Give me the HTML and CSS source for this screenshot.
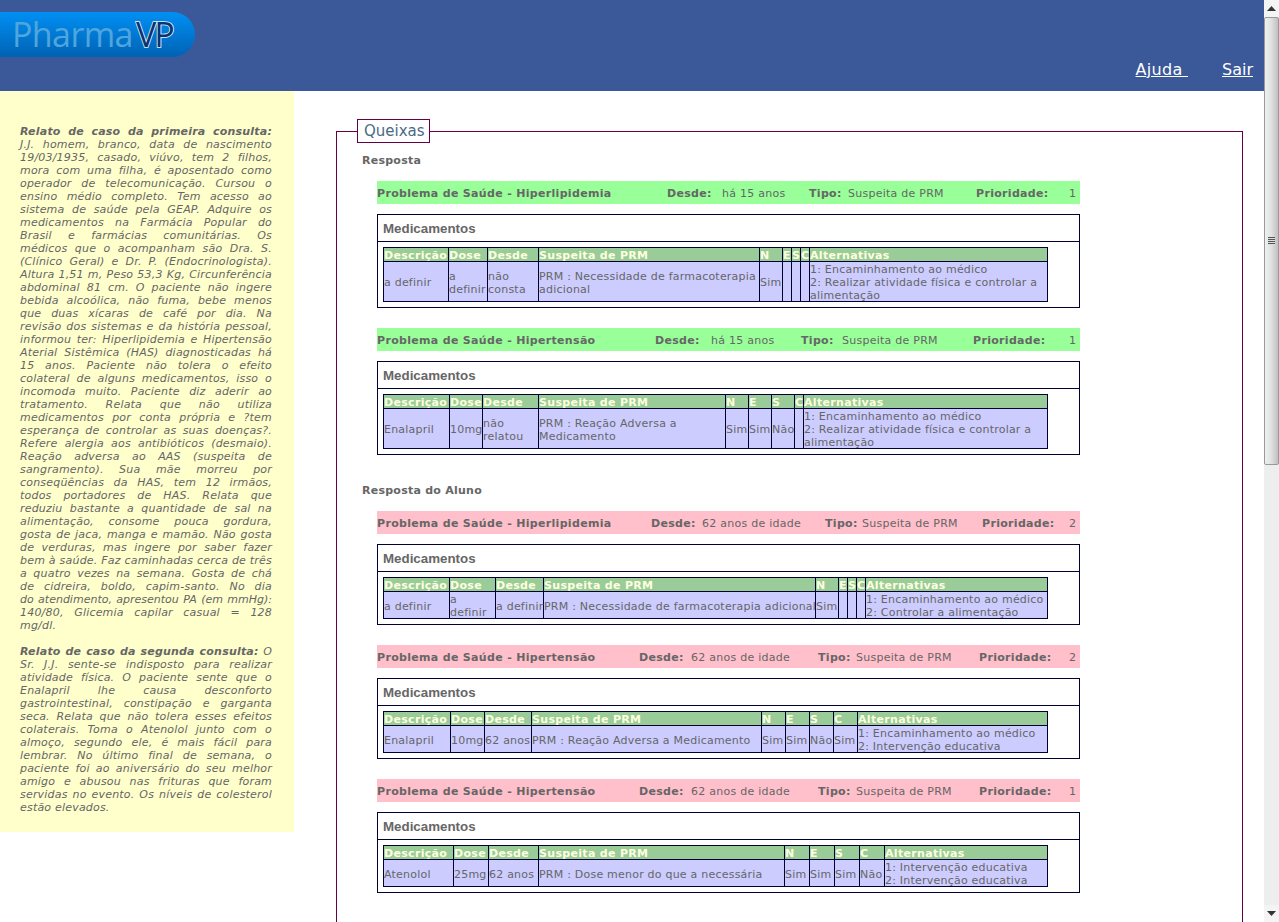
FILE: index.html
```html
<!DOCTYPE html>
<html lang="pt-BR">
<head>
    <meta charset="UTF-8">
    <meta name="viewport" content="width=device-width, initial-scale=1.0">
    <title>PharmaVP</title>
    <link rel="stylesheet" href="styles.css">
</head>
<body>
<div class="page">
    <!-- Top banner -->
    <div class="header">
        <div class="logo"><span class="logo-pharma">Pharma</span><span class="logo-vp">VP</span></div>
        <div class="links">
            <a href="#" class="ajuda">Ajuda&nbsp;</a>
            <a href="#">Sair</a>
        </div>
    </div>

    <div class="content">
        <!-- Case report -->
        <div class="relato">
            <p><b class="linha">Relato de caso da primeira consulta:</b>J.J. homem, branco, data de nascimento 19/03/1935, casado, viúvo, tem 2 filhos, mora com uma filha, é aposentado como operador de telecomunicação. Cursou o ensino médio completo. Tem acesso ao sistema de saúde pela GEAP. Adquire os medicamentos na Farmácia Popular do Brasil e farmácias comunitárias. Os médicos que o acompanham são Dra. S. (Clínico Geral) e Dr. P. (Endocrinologista). Altura 1,51 m, Peso 53,3 Kg, Circunferência abdominal 81 cm. O paciente não ingere bebida alcoólica, não fuma, bebe menos que duas xícaras de café por dia. Na revisão dos sistemas e da história pessoal, informou ter: Hiperlipidemia e Hipertensão Aterial Sistêmica (HAS) diagnosticadas há 15 anos. Paciente não tolera o efeito colateral de alguns medicamentos, isso o incomoda muito. Paciente diz aderir ao tratamento. Relata que não utiliza medicamentos por conta própria e ?tem esperança de controlar as suas doenças?. Refere alergia aos antibióticos (desmaio). Reação adversa ao AAS (suspeita de sangramento). Sua mãe morreu por conseqüências da HAS, tem 12 irmãos, todos portadores de HAS. Relata que reduziu bastante a quantidade de sal na alimentação, consome pouca gordura, gosta de jaca, manga e mamão. Não gosta de verduras, mas ingere por saber fazer bem à saúde. Faz caminhadas cerca de três a quatro vezes na semana. Gosta de chá de&nbsp;cidreira, boldo, capim-santo. No dia <span class="justo">do atendimento, apresentou PA (em mmHg):</span> 140/80, Glicemia capilar casual = 128 mg/dl.</p>
            <p><b>Relato de caso da segunda consulta:</b> O Sr. J.J. sente-se indisposto para realizar atividade física. O paciente sente que o Enalapril lhe causa desconforto gastrointestinal, constipação e garganta seca. Relata que não tolera esses efeitos colaterais. Toma o Atenolol junto com o almoço, segundo ele, é mais fácil para lembrar. No último final de semana, o paciente foi ao aniversário do seu melhor amigo e abusou nas frituras que foram servidas no evento. Os níveis de colesterol estão elevados.</p>
        </div>

        <div class="main">
            <fieldset class="queixas">
                <legend>Queixas</legend>

                <h4 class="titulo">Resposta</h4>

                <table class="problema certo">
                    <colgroup><col width="290"><col width="55"><col width="87"><col width="39"><col width="128"><col width="93"><col></colgroup>
                    <tr><th>Problema de Saúde - Hiperlipidemia</th><th>Desde:</th><td>há 15 anos</td><th>Tipo:</th><td>Suspeita de PRM</td><th>Prioridade:</th><td>1</td></tr>
                </table>
                <div class="medicamentos">
                    <div class="med-titulo">Medicamentos</div>
                    <div class="med-corpo">
                        <table class="lista">
                            <colgroup><col width="65"><col width="39"><col width="51"><col width="221"><col width="23"><col width="9"><col width="9"><col width="9"><col width="238"></colgroup>
                            <tr><th>Descrição</th><th>Dose</th><th>Desde</th><th>Suspeita de PRM</th><th>N</th><th>E</th><th>S</th><th>C</th><th>Alternativas</th></tr>
                            <tr><td>a definir</td><td>a definir</td><td>não consta</td><td>PRM : Necessidade de farmacoterapia adicional</td><td>Sim</td><td></td><td></td><td></td><td>1: Encaminhamento ao médico<br>2: Realizar atividade física e controlar a alimentação</td></tr>
                        </table>
                    </div>
                </div>

                <table class="problema certo">
                    <colgroup><col width="278"><col width="56"><col width="90"><col width="41"><col width="131"><col width="96"><col></colgroup>
                    <tr><th>Problema de Saúde - Hipertensão</th><th>Desde:</th><td>há 15 anos</td><th>Tipo:</th><td>Suspeita de PRM</td><th>Prioridade:</th><td>1</td></tr>
                </table>
                <div class="medicamentos">
                    <div class="med-titulo">Medicamentos</div>
                    <div class="med-corpo">
                        <table class="lista">
                            <colgroup><col width="66"><col width="33"><col width="56"><col width="187"><col width="23"><col width="23"><col width="23"><col width="9"><col width="244"></colgroup>
                            <tr><th>Descrição</th><th>Dose</th><th>Desde</th><th>Suspeita de PRM</th><th>N</th><th>E</th><th>S</th><th>C</th><th>Alternativas</th></tr>
                            <tr><td>Enalapril</td><td>10mg</td><td>não relatou</td><td>PRM : Reação Adversa a Medicamento</td><td>Sim</td><td>Sim</td><td>Não</td><td></td><td>1: Encaminhamento ao médico<br>2: Realizar atividade física e controlar a alimentação</td></tr>
                        </table>
                    </div>
                </div>

                <h4 class="titulo aluno">Resposta do Aluno</h4>

                <table class="problema errado">
                    <colgroup><col width="274"><col width="51"><col width="123"><col width="37"><col width="120"><col width="87"><col></colgroup>
                    <tr><th>Problema de Saúde - Hiperlipidemia</th><th>Desde:</th><td>62 anos de idade</td><th>Tipo:</th><td>Suspeita de PRM</td><th>Prioridade:</th><td>2</td></tr>
                </table>
                <div class="medicamentos">
                    <div class="med-titulo">Medicamentos</div>
                    <div class="med-corpo">
                        <table class="lista">
                            <colgroup><col width="66"><col width="46"><col width="48"><col width="272"><col width="23"><col width="9"><col width="9"><col width="9"><col width="182"></colgroup>
                            <tr><th>Descrição</th><th>Dose</th><th>Desde</th><th>Suspeita de PRM</th><th>N</th><th>E</th><th>S</th><th>C</th><th>Alternativas</th></tr>
                            <tr><td>a definir</td><td>a definir</td><td class="uma-linha">a definir</td><td class="uma-linha">PRM : Necessidade de farmacoterapia adicional</td><td>Sim</td><td></td><td></td><td></td><td>1: Encaminhamento ao médico<br>2: Controlar a alimentação</td></tr>
                        </table>
                    </div>
                </div>

                <table class="problema errado">
                    <colgroup><col width="262"><col width="52"><col width="127"><col width="38"><col width="123"><col width="90"><col></colgroup>
                    <tr><th>Problema de Saúde - Hipertensão</th><th>Desde:</th><td>62 anos de idade</td><th>Tipo:</th><td>Suspeita de PRM</td><th>Prioridade:</th><td>2</td></tr>
                </table>
                <div class="medicamentos">
                    <div class="med-titulo">Medicamentos</div>
                    <div class="med-corpo">
                        <table class="lista">
                            <colgroup><col width="67"><col width="34"><col width="47"><col width="230"><col width="24"><col width="24"><col width="24"><col width="24"><col width="190"></colgroup>
                            <tr><th>Descrição</th><th>Dose</th><th>Desde</th><th>Suspeita de PRM</th><th>N</th><th>E</th><th>S</th><th>C</th><th>Alternativas</th></tr>
                            <tr><td>Enalapril</td><td>10mg</td><td>62 anos</td><td>PRM : Reação Adversa a Medicamento</td><td>Sim</td><td>Sim</td><td>Não</td><td>Sim</td><td>1: Encaminhamento ao médico<br>2: Intervenção educativa</td></tr>
                        </table>
                    </div>
                </div>

                <table class="problema errado">
                    <colgroup><col width="262"><col width="52"><col width="127"><col width="38"><col width="123"><col width="90"><col></colgroup>
                    <tr><th>Problema de Saúde - Hipertensão</th><th>Desde:</th><td>62 anos de idade</td><th>Tipo:</th><td>Suspeita de PRM</td><th>Prioridade:</th><td>1</td></tr>
                </table>
                <div class="medicamentos">
                    <div class="med-titulo">Medicamentos</div>
                    <div class="med-corpo">
                        <table class="lista">
                            <colgroup><col width="70"><col width="35"><col width="50"><col width="246"><col width="25"><col width="25"><col width="25"><col width="25"><col width="163"></colgroup>
                            <tr><th>Descrição</th><th>Dose</th><th>Desde</th><th>Suspeita de PRM</th><th>N</th><th>E</th><th>S</th><th>C</th><th>Alternativas</th></tr>
                            <tr><td>Atenolol</td><td>25mg</td><td>62 anos</td><td>PRM : Dose menor do que a necessária</td><td>Sim</td><td>Sim</td><td>Sim</td><td>Não</td><td>1: Intervenção educativa<br>2: Intervenção educativa</td></tr>
                        </table>
                    </div>
                </div>
            </fieldset>
        </div>
    </div>
</div>

<!-- Window scrollbar as it appears in the screenshot -->
<div class="scrollbar">
    <div class="scroll-btn"><svg width="9" height="5" viewBox="0 0 9 5"><path d="M4.5 0L9 5H0z" fill="#333"/></svg></div>
    <div class="scroll-thumb"><span class="grip"></span></div>
    <div class="scroll-track"></div>
    <div class="scroll-btn"><svg width="9" height="5" viewBox="0 0 9 5"><path d="M0 0H9L4.5 5z" fill="#333"/></svg></div>
</div>
</body>
</html>
```

FILE: styles.css
```css
html, body {
    margin: 0;
    height: 922px;
    overflow: hidden;
}
body {
    display: flex;
    font-family: "DejaVu Sans", Verdana, sans-serif;
    font-size: 11px;
    line-height: 13px;
    letter-spacing: 0.25px;
    color: #666666;
    background-color: #fff;
}
.page {
    width: 1264px;
    flex: none;
}

/* Banner */
.header {
    height: 91px;
    background-color: #3b5998;
    display: flex;
    justify-content: space-between;
}
.logo {
    width: 195px;
    height: 45px;
    margin-top: 12px;
    padding-left: 12px;
    box-sizing: border-box;
    background: linear-gradient(#0090f4, #0062b4);
    border-radius: 0 23px 23px 0;
    font-family: "Open Sans", sans-serif;
    font-size: 34px;
    line-height: 45px;
    letter-spacing: 0;
    white-space: nowrap;
}
.logo-pharma {
    color: #4fa6dc;
    letter-spacing: -0.6px;
}
.logo-vp {
    color: #0a3570;
    margin-left: 3px;
    letter-spacing: -2px;
    -webkit-text-stroke: 1.6px #e8f4ff;
    paint-order: stroke fill;
}
.links {
    align-self: flex-end;
    padding: 0 11px 11px 0;
    font-size: 16px;
    line-height: 20px;
    letter-spacing: 0;
}
.links a {
    color: #fff;
}
.ajuda {
    margin-right: 29px;
    letter-spacing: 0.3px;
}

.content {
    display: flex;
    align-items: flex-start;
}

/* Case report column */
.relato {
    width: 294px;
    height: 741px;
    flex: none;
    box-sizing: border-box;
    padding: 34px 22px 0 20px;
    background-color: #ffffcc;
    font-style: italic;
    text-align: justify;
    letter-spacing: 0.2px;
}
.relato p {
    margin: 0 0 13px;
}
.relato .linha {
    display: block;
    text-align-last: justify;
}
/* this run needs tighter spacing to hold on one line */
.relato .justo {
    letter-spacing: 0;
    white-space: nowrap;
}

.main {
    padding: 28px 0 0 42px;
}
.queixas {
    width: 907px;
    box-sizing: border-box;
    height: 900px;
    margin: 0;
    padding: 0;
    border: 1px solid #660044;
}
.queixas legend {
    margin-left: 20px;
    padding: 0 4px 0 6px;
    height: 22px;
    font-size: 15px;
    line-height: 22px;
    letter-spacing: 0;
    color: #4a6a85;
    border: 1px solid #660044;
    background-color: #fff;
}
.titulo {
    margin: 11px 0 14px 25px;
    font-size: 11px;
    line-height: 13px;
    font-weight: bold;
}
.titulo.aluno {
    margin-top: 29px;
    margin-bottom: 14px;
}

/* Problem bars */
.problema {
    width: 703px;
    height: 23px;
    margin-left: 40px;
    border-collapse: collapse;
    table-layout: fixed;
}
.problema th, .problema td {
    padding: 1px 0 0;
    text-align: left;
    white-space: nowrap;
}
.problema th {
    letter-spacing: 0.32px;
}
.certo {
    background-color: #99ff99;
}
.errado {
    background-color: #ffc0cb;
}

/* Medicine box */
.medicamentos {
    width: 703px;
    box-sizing: border-box;
    margin: 10px 0 20px 40px;
    border: 1px solid #000033;
}
.med-titulo {
    height: 26px;
    padding-left: 5px;
    border-bottom: 1px solid #000033;
    font-family: "Liberation Sans", Arial, sans-serif;
    font-size: 13.33px;
    font-weight: bold;
    line-height: 27px;
    letter-spacing: 0;
}
.med-corpo {
    padding: 5px;
}
.lista {
    width: 665px;
    border-collapse: collapse;
    table-layout: fixed;
}
.lista th, .lista td {
    padding: 0;
    border: 1px solid #000033;
    text-align: left;
    overflow: visible;
}
/* text sits one pixel lower in the cell, row height unchanged */
.lista th::before, .lista td::before {
    content: "";
    display: block;
    height: 1px;
}
.lista th::after, .lista td::after {
    content: "";
    display: block;
    margin-bottom: -1px;
}
.lista th {
    height: 13px;
    background-color: #99cc99;
    color: #ffffdd;
    letter-spacing: 0.32px;
    white-space: nowrap;
}
.lista td {
    background-color: #ccccff;
    letter-spacing: 0.22px;
}
.lista .uma-linha {
    white-space: nowrap;
}

/* Scrollbar */
.scrollbar {
    width: 15px;
    height: 922px;
    flex: none;
    display: flex;
    flex-direction: column;
    background-color: #eeeeee;
}
.scroll-btn {
    height: 17px;
    display: flex;
    align-items: center;
    justify-content: center;
    background-color: #f4f4f4;
}
.scroll-thumb {
    height: 448px;
    box-sizing: border-box;
    display: flex;
    align-items: center;
    justify-content: center;
    border: 1px solid #999;
    border-radius: 2px;
    background: linear-gradient(to right, #f0f0f0, #e2e2e2 45%, #c0c0c0);
}
.grip {
    width: 7px;
    height: 8px;
    background: repeating-linear-gradient(#555 0, #555 1px, #ddd 1px, #ddd 2px);
}
.scroll-track {
    flex: 1;
}
```
